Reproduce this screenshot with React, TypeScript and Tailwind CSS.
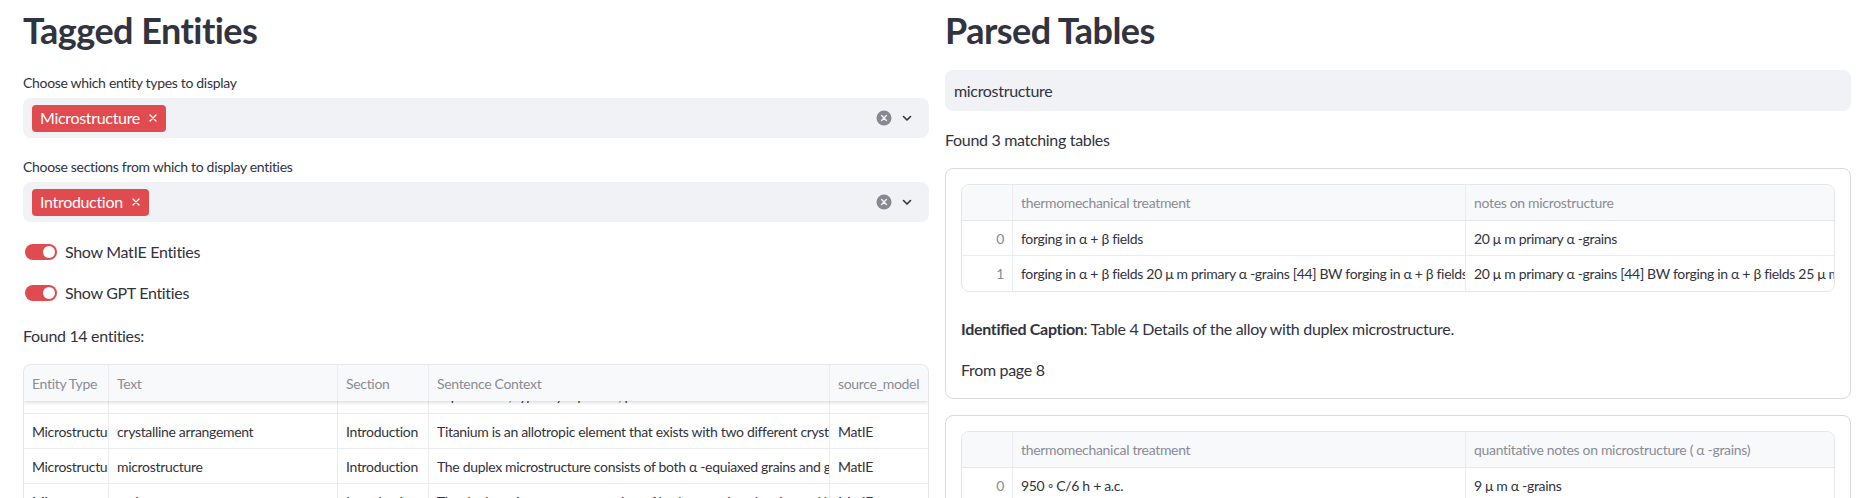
import React from 'react';

const RED = 'bg-[#e04b4f]';

const ClearIcon = () => (
  <svg width="16" height="16" viewBox="0 0 16 16" className="shrink-0">
    <circle cx="8" cy="8" r="7.5" fill="#868894" />
    <path d="M5.6 5.6 L10.4 10.4 M10.4 5.6 L5.6 10.4" stroke="#f0f2f6" strokeWidth="1.4" strokeLinecap="round" />
  </svg>
);

const Chevron = () => (
  <svg width="12" height="12" viewBox="0 0 12 12" className="shrink-0">
    <path d="M2.5 4.5 L6 8 L9.5 4.5" fill="none" stroke="#31333f" strokeWidth="1.6" strokeLinecap="round" strokeLinejoin="round" />
  </svg>
);

const Tag = ({ label }: { label: string }) => (
  <span className={`${RED} inline-flex h-[27px] items-center gap-[9px] rounded-[4px] pl-[8px] pr-[9px] text-[16px] text-white`}>
    {label}
    <svg width="8" height="8" viewBox="0 0 8 8">
      <path d="M1 1 L7 7 M7 1 L1 7" stroke="#fff" strokeWidth="1.3" strokeLinecap="round" />
    </svg>
  </span>
);

const MultiSelect = ({ label, value }: { label: string; value: string }) => (
  <div>
    <div className="h-[20px] text-[14px] leading-[20px]">{label}</div>
    <div className="mt-[5px] flex h-[40px] items-center rounded-[8px] bg-[#f0f2f6] pl-[9px] pr-[16px]">
      <Tag label={value} />
      <div className="flex-1" />
      <ClearIcon />
      <div className="ml-[9px]">
        <Chevron />
      </div>
    </div>
  </div>
);

const Toggle = ({ label }: { label: string }) => (
  <div className="flex h-[24px] items-center">
    <div className={`${RED} ml-[2px] flex h-[16px] w-[32px] items-center justify-end rounded-full pr-[2px]`}>
      <div className="h-[12px] w-[12px] rounded-full bg-white" />
    </div>
    <span className="ml-[8px] text-[16px]">{label}</span>
  </div>
);

const cell = 'overflow-hidden whitespace-nowrap px-[8px] border-r border-[#ebecf0] last:border-r-0';

const entityCols = 'grid grid-cols-[85px_229px_91px_401px_100px]';

const entityRows = [
  ['Microstructure', 'crystalline arrangement', 'Introduction', 'Titanium is an allotropic element that exists with two different crystal structures depending on temperature', 'MatIE'],
  ['Microstructure', 'microstructure', 'Introduction', 'The duplex microstructure consists of both α -equiaxed grains and grain boundary α phase', 'MatIE'],
  ['Microstructure', 'grains', 'Introduction', 'The duplex microstructure consists of both α -equiaxed grains and lamellar colonies', 'MatIE'],
];

const EntityTable = () => (
  <div className="overflow-hidden rounded-t-[8px] border border-b-0 border-[#e6e7eb] text-[14px]">
    <div className={`${entityCols} relative z-10 h-[36px] items-center bg-[#f8f9fb] text-[#8a8c96] shadow-[0_2px_3px_rgba(0,0,0,0.12)]`}>
      {['Entity Type', 'Text', 'Section', 'Sentence Context', 'source_model'].map((h) => (
        <div key={h} className={`${cell} flex h-full items-center`}>{h}</div>
      ))}
    </div>
    <div className="h-[120px] overflow-hidden">
      <div className="mt-[-22px]">
        {/* row scrolled mostly out of view under the header */}
        <div className={`${entityCols} h-[35px] border-b border-[#ebecf0]`}>
          {['', '', '', 'in pure form, typically equiaxed, p', ''].map((c, i) => (
            <div key={i} className={`${cell} flex h-full items-center`}>
              <span className="-translate-y-[1px]">{c}</span>
            </div>
          ))}
        </div>
        {entityRows.map((r, ri) => (
          <div key={ri} className={`${entityCols} h-[35px] border-b border-[#ebecf0]`}>
            {r.map((c, i) => (
              <div key={i} className={`${cell} flex h-full items-center`}>{c}</div>
            ))}
          </div>
        ))}
      </div>
    </div>
  </div>
);

const tblCols = 'grid grid-cols-[51px_453px_1fr]';

const ParsedTable = ({ headers, rows }: { headers: string[]; rows: string[][] }) => (
  <div className="overflow-hidden rounded-[8px] border border-[#e6e7eb] text-[14px]">
    <div className={`${tblCols} h-[36px] items-center border-b border-[#e6e7eb] bg-[#f8f9fb] text-[#8a8c96]`}>
      <div className={`${cell} h-full`} />
      {headers.map((h) => (
        <div key={h} className={`${cell} flex h-full items-center`}>{h}</div>
      ))}
    </div>
    {rows.map((r, ri) => (
      <div key={ri} className={`${tblCols} h-[35px] border-b border-[#ebecf0] last:border-b-0`}>
        <div className={`${cell} flex h-full items-center justify-end text-[#8a8c96]`}>{ri}</div>
        {r.map((c, i) => (
          <div key={i} className={`${cell} flex h-full items-center`}>{c}</div>
        ))}
      </div>
    ))}
  </div>
);

export default function App() {
  return (
    <div className="h-[498px] overflow-hidden bg-white font-[Lato,sans-serif] tracking-[-0.02em] text-[#31333f]">
      <div className="grid grid-cols-2 gap-[16px] pl-[23px] pr-[15px]">
        {/* left column */}
        <div>
          <h2 className="mt-[9px] text-[36px] font-bold leading-[43px] tracking-[-0.015em]">Tagged Entities</h2>
          <div className="mt-[21px]">
            <MultiSelect label="Choose which entity types to display" value="Microstructure" />
          </div>
          <div className="mt-[19px]">
            <MultiSelect label="Choose sections from which to display entities" value="Introduction" />
          </div>
          <div className="mt-[18px]">
            <Toggle label="Show MatIE Entities" />
          </div>
          <div className="mt-[17px]">
            <Toggle label="Show GPT Entities" />
          </div>
          <p className="mt-[19px] text-[16px] leading-[24px]">Found 14 entities:</p>
          <div className="mt-[16px]">
            <EntityTable />
          </div>
        </div>

        {/* right column */}
        <div>
          <h2 className="mt-[9px] text-[36px] font-bold leading-[43px] tracking-[-0.015em]">Parsed Tables</h2>
          <div className="mt-[18px] flex h-[41px] items-center rounded-[8px] bg-[#f0f2f6] px-[9px] text-[16px]">
            microstructure
          </div>
          <p className="mt-[17px] text-[16px] leading-[24px]">Found 3 matching tables</p>
          <div className="mt-[16px] rounded-[8px] border border-[#d9dade] px-[15px] pt-[15px] pb-[16px]">
            <ParsedTable
              headers={['thermomechanical treatment', 'notes on microstructure']}
              rows={[
                ['forging in α + β fields', '20 μ m primary α -grains'],
                [
                  'forging in α + β fields 20 μ m primary α -grains [44] BW forging in α + β fields',
                  '20 μ m primary α -grains [44] BW forging in α + β fields 25 μ m primary α -grains',
                ],
              ]}
            />
            <p className="mt-[25px] text-[16px] leading-[24px]">
              <strong className="font-bold">Identified Caption</strong>: Table 4 Details of the alloy with duplex microstructure.
            </p>
            <p className="mt-[17px] text-[16px] leading-[24px]">From page 8</p>
          </div>
          <div className="mt-[16px] rounded-[8px] border border-[#d9dade] px-[15px] pt-[15px] pb-[16px]">
            <ParsedTable
              headers={['thermomechanical treatment', 'quantitative notes on microstructure ( α -grains)']}
              rows={[
                ['950 ◦ C/6 h + a.c.', '9 μ m α -grains'],
                ['950 ◦ C/6 h + a.c. 9 μ m α -grains', '12 μ m α -grains'],
              ]}
            />
          </div>
        </div>
      </div>
    </div>
  );
}
